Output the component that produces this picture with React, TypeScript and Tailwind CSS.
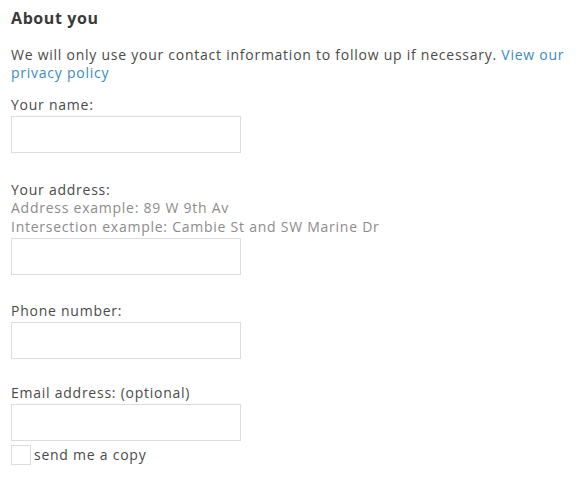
import React from "react";

function Field({ label, hints, mt }: { label: string; hints?: string[]; mt: string }) {
  return (
    <div className={mt}>
      <label className="block text-[14px] leading-[18px] text-[#4a4a4a]">{label}</label>
      {hints?.map((h) => (
        <div key={h} className="text-[14px] leading-[18.5px] text-[#8c8c8c]">{h}</div>
      ))}
      <input type="text" className="mt-[2px] block h-[37px] w-[230px] border border-[#dcdcdc] bg-white outline-none" />
    </div>
  );
}

export default function App() {
  return (
    <div className="min-h-[482px] w-[576px] bg-white pl-[11px] pr-[4px] pt-[7px] tracking-[0.75px] text-[#4a4a4a]" style={{ fontFamily: "'Open Sans', sans-serif" }}>
      <h2 className="text-[16px] font-bold leading-[22px] tracking-[0.6px] text-[#3a3a3a]">About you</h2>
      <p className="mt-[17px] text-[14px] leading-[18px] text-[#4a4a4a]">
        We will only use your contact information to follow up if necessary.{" "}
        <a className="text-[#3a8ac4]">View our privacy policy</a>
      </p>
      <Field label="Your name:" mt="mt-[14px]" />
      <Field label="Your address:" hints={["Address example: 89 W 9th Av", "Intersection example: Cambie St and SW Marine Dr"]} mt="mt-[28px]" />
      <Field label="Phone number:" mt="mt-[27px]" />
      <Field label="Email address: (optional)" mt="mt-[25px]" />
      <label className="mt-[4px] flex items-center gap-[3px] text-[14px] leading-[18px] text-[#4a4a4a]">
        <span className="block h-[20px] w-[20px] border border-[#dcdcdc] bg-white" />
        send me a copy
      </label>
    </div>
  );
}
